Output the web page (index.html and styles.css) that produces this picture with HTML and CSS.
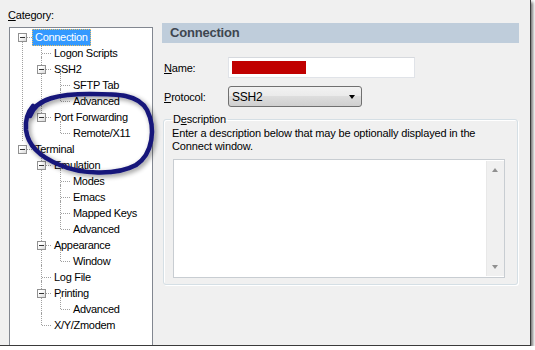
FILE: index.html
```html
<!DOCTYPE html>
<html>
<head>
<meta charset="utf-8">
<link rel="stylesheet" href="styles.css">
</head>
<body>
<div class="window">
  <div class="leftcol">
    <div class="catlabel"><u>C</u>ategory:</div>
    <div class="treebox">
      <ul class="tree root">
        <li class="open"><div class="row"><span class="exp"></span><span class="lbl sel">Connection</span></div>
          <ul class="tree">
            <li><div class="row"><span class="lbl">Logon Scripts</span></div></li>
            <li class="open"><div class="row"><span class="exp"></span><span class="lbl">SSH2</span></div>
              <ul class="tree">
                <li><div class="row"><span class="lbl">SFTP Tab</span></div></li>
                <li><div class="row"><span class="lbl">Advanced</span></div></li>
              </ul>
            </li>
            <li class="open"><div class="row"><span class="exp"></span><span class="lbl">Port Forwarding</span></div>
              <ul class="tree">
                <li><div class="row"><span class="lbl">Remote/X11</span></div></li>
              </ul>
            </li>
          </ul>
        </li>
        <li class="open"><div class="row"><span class="exp"></span><span class="lbl">Terminal</span></div>
          <ul class="tree">
            <li class="open"><div class="row"><span class="exp"></span><span class="lbl">Emulation</span></div>
              <ul class="tree">
                <li><div class="row"><span class="lbl">Modes</span></div></li>
                <li><div class="row"><span class="lbl">Emacs</span></div></li>
                <li><div class="row"><span class="lbl">Mapped Keys</span></div></li>
                <li><div class="row"><span class="lbl">Advanced</span></div></li>
              </ul>
            </li>
            <li class="open"><div class="row"><span class="exp"></span><span class="lbl">Appearance</span></div>
              <ul class="tree">
                <li><div class="row"><span class="lbl">Window</span></div></li>
              </ul>
            </li>
            <li><div class="row"><span class="lbl">Log File</span></div></li>
            <li class="open"><div class="row"><span class="exp"></span><span class="lbl">Printing</span></div>
              <ul class="tree">
                <li><div class="row"><span class="lbl">Advanced</span></div></li>
              </ul>
            </li>
            <li><div class="row"><span class="lbl">X/Y/Zmodem</span></div></li>
          </ul>
        </li>
      </ul>
    </div>
  </div>
  <div class="rightcol">
    <div class="header">Connection</div>
    <div class="field">
      <label class="flabel"><u>N</u>ame:</label>
      <div class="input"><span class="redact"></span></div>
    </div>
    <div class="field">
      <label class="flabel"><u>P</u>rotocol:</label>
      <div class="select"><span>SSH2</span><span class="arrow"></span></div>
    </div>
    <fieldset class="group">
      <legend>D<u>e</u>scription</legend>
      <p class="desc">Enter a description below that may be optionally displayed in the Connect window.</p>
      <div class="textarea">
        <div class="tacontent"></div>
        <div class="vscroll"><span class="up"></span><span class="down"></span></div>
      </div>
    </fieldset>
  </div>
  <svg class="ink" width="535" height="350" viewBox="0 0 535 350">
    <defs>
      <filter id="sh" x="-20%" y="-20%" width="140%" height="140%">
        <feGaussianBlur in="SourceAlpha" stdDeviation="2.5"/>
        <feOffset dx="2" dy="2" result="b"/>
        <feComponentTransfer><feFuncA type="linear" slope="0.45"/></feComponentTransfer>
        <feMerge><feMergeNode/><feMergeNode in="SourceGraphic"/></feMerge>
      </filter>
    </defs>
    <path filter="url(#sh)" d="M 30 116 C 36 98, 60 94, 90 94 C 118 94, 138 94, 147 110 C 156 128, 153 154, 136 165 C 116 176, 80 174, 60 165 C 40 157, 28 146, 26 130 C 25 120, 27 113, 33 106" fill="none" stroke="#15157a" stroke-width="4.5" stroke-linecap="round" stroke-linejoin="round"/>
  </svg>
</div>
</body>
</html>
```
FILE: styles.css
```css
html, body {
  margin: 0;
  padding: 0;
  background: #ffffff;
}
.window {
  position: relative;
  width: 530px;
  height: 345px;
  background: #f0f0f0;
  border-right: 1px solid #3a3a3a;
  border-bottom: 1px solid #3a3a3a;
  box-shadow: 2px 2px 3px rgba(0,0,0,0.55);
  display: flex;
  box-sizing: content-box;
  overflow: hidden;
  font-family: "Liberation Sans", Arial, sans-serif;
  font-size: 11px;
  color: #000;
}
u { text-decoration: underline; }
.leftcol {
  width: 145px;
  padding: 9px 0 0 8px;
  display: flex;
  flex-direction: column;
}
.catlabel {
  height: 18px;
  line-height: 13px;
  letter-spacing: -0.2px;
}
.treebox {
  margin-left: 1px;
  flex: 1;
  background: #fff;
  border: 1px solid #828790;
  border-bottom: none;
  box-sizing: border-box;
  width: 144px;
  padding-top: 1px;
}
.tree {
  list-style: none;
  margin: 0;
  padding: 0 0 0 19px;
}
.tree.root { padding-left: 0; }
.tree li {
  position: relative;
}
.tree li::before {
  content: "";
  position: absolute;
  left: 12px;
  top: -4px;
  bottom: 0;
  border-left: 1px dotted #a0a0a0;
}
.tree li:last-child::before {
  bottom: auto;
  height: 12px;
}
.tree.root > li:first-child::before { top: 8px; }
.tree.root > li:last-child::before { height: 0; }
.tree li::after {
  content: "";
  position: absolute;
  left: 13px;
  top: 8px;
  width: 9px;
  border-top: 1px dotted #a0a0a0;
}
.row {
  position: relative;
  height: 16px;
  display: flex;
  align-items: center;
  padding-left: 23px;
  z-index: 1;
}
.exp {
  position: absolute;
  left: 8px;
  top: 4px;
  width: 7px;
  height: 7px;
  border: 1px solid #919191;
  background: linear-gradient(135deg, #ffffff 30%, #d8d8d8);
}
.exp::after {
  content: "";
  position: absolute;
  left: 1px;
  top: 3px;
  width: 5px;
  height: 1px;
  background: #333;
}
.lbl {
  padding: 0 2px;
  height: 15px;
  line-height: 15px;
  letter-spacing: -0.3px;
  white-space: nowrap;
  border: 1px solid transparent;
  margin-left: -1px;
}
.lbl.sel {
  background: #3399ff;
  color: #fff;
  border: 1px dotted #f0c060;
}
.rightcol {
  margin-left: 9px;
  padding-top: 23px;
  width: 357px;
}
.header {
  height: 20px;
  background: #bfcddb;
  color: #3e4650;
  font-weight: bold;
  font-size: 13px;
  line-height: 20px;
  padding-left: 8px;
  letter-spacing: -0.2px;
}
.field {
  display: flex;
  align-items: center;
  margin-left: 2px;
}
.flabel {
  width: 64px;
  letter-spacing: -0.2px;
}
.field + .field { margin-top: 8px; }
.header + .field { margin-top: 14px; }
.input {
  width: 187px;
  height: 21px;
  box-sizing: border-box;
  background: #fff;
  border: 1px solid #e0e3e8;
  border-top-color: #d6d9de;
  padding: 3px 0 0 3px;
}
.redact {
  display: block;
  width: 74px;
  height: 13px;
  background: #c00000;
}
.select {
  width: 134px;
  height: 21px;
  box-sizing: border-box;
  border: 1px solid #707070;
  border-radius: 3px;
  background: linear-gradient(#f2f2f2 0%, #ebebeb 45%, #dddddd 50%, #cfcfcf 100%);
  display: flex;
  align-items: center;
  justify-content: space-between;
  padding: 0 6px 0 3px;
  font-size: 12px;
  letter-spacing: -0.2px;
}
.arrow {
  width: 0;
  height: 0;
  border-left: 3.5px solid transparent;
  border-right: 3.5px solid transparent;
  border-top: 4px solid #000;
}
.group {
  margin: 6px 0 0 1px;
  width: 355px;
  height: 172px;
  box-sizing: border-box;
  border: 1px solid #d5dfe5;
  border-radius: 3px;
  box-shadow: inset 1px 1px 0 #fff, 1px 1px 0 #fff;
  padding: 0 8px 0 8px;
  position: relative;
}
.group legend {
  padding: 0 2px;
  margin-left: -1px;
  letter-spacing: -0.2px;
  font-size: 11px;
  line-height: 12px;
}
.desc {
  margin: 2px 0 0 0;
  line-height: 13px;
  letter-spacing: -0.15px;
}
.textarea {
  margin-top: 6px;
  margin-left: 1px;
  width: 332px;
  height: 119px;
  box-sizing: border-box;
  border: 1px solid #c8cdd2;
  background: #fff;
  display: flex;
  justify-content: flex-end;
}
.tacontent { flex: 1; }
.vscroll {
  width: 17px;
  margin: 1px 0 1px 0;
  background: #f0f0f0;
  border-left: 1px solid #e8e8e8;
  position: relative;
}
.vscroll .up, .vscroll .down {
  position: absolute;
  left: 5px;
  width: 0; height: 0;
  border-left: 3.5px solid transparent;
  border-right: 3.5px solid transparent;
}
.vscroll .up { top: 7px; border-bottom: 4px solid #909090; }
.vscroll .down { bottom: 7px; border-top: 4px solid #909090; }
.ink {
  position: absolute;
  left: 0;
  top: 0;
  pointer-events: none;
  z-index: 5;
}
```
